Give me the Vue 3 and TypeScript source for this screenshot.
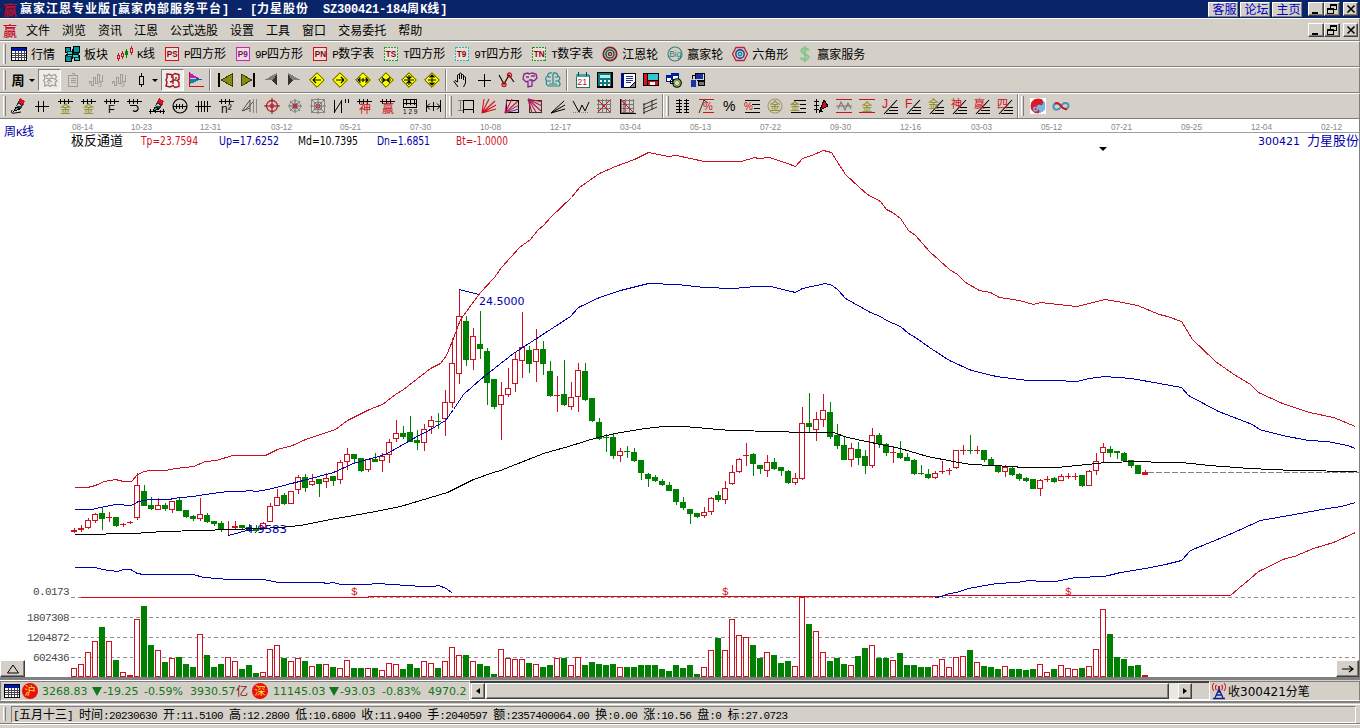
<script setup lang="ts">
import { h, type FunctionalComponent } from 'vue'

interface Shape { d?: string; s?: string; f?: string; w?: number; t?: string; x?: number; y?: number; z?: number; b?: boolean; o?: boolean; dash?: string }
type Icon = Shape[]

const K = '#000', R = '#d01020', G = '#808080', Y = '#8a8a10', P = '#8a2090'
const L = (d: string, s = K, w = 1): Shape => ({ d, s, w })
const S = (d: string, s = K, w = 1): Shape => ({ d, s, w, o: true })
const F = (d: string, f = K, s?: string): Shape => ({ d, f, s, w: 1 })
const T = (t: string, x: number, y: number, s = K, z = 9): Shape => ({ t, x, y, s, z })
const C = (x: number, y: number, r: number) => `M${x - r} ${y}a${r} ${r} 0 1 0 ${2 * r} 0a${r} ${r} 0 1 0 ${-2 * r} 0z`

/** 16x16 glyph made of strokes, fills and short labels */
const Ic: FunctionalComponent<{ g: Icon }> = (props) =>
  h('svg', { width: 16, height: 16, viewBox: '0 0 16 16', style: { overflow: 'visible', display: 'block', flex: 'none' } },
    props.g.map((e) => e.t
      ? h('text', { x: e.x, y: e.y, fill: e.s, 'font-size': e.z, 'font-weight': e.b ? 700 : 400, 'font-family': '"Liberation Sans","Noto Sans CJK SC",sans-serif' }, e.t)
      : h('path', { d: e.d, fill: e.f ?? 'none', stroke: e.s ?? 'none', 'stroke-width': e.w, 'stroke-dasharray': e.dash, 'shape-rendering': e.o ? 'auto' : 'crispEdges' })))
Ic.props = ['g']

/** SimSun-like text: full-width characters at 12px, half-width at 6px */
const Tx: FunctionalComponent<{ t: string }> = (props) =>
  h('span', { style: { whiteSpace: 'pre' } }, (props.t.match(/[\x20-\x7e]+|[^\x20-\x7e]+/g) ?? []).map((r) =>
    h('span', { class: /^[\x20-\x7e]/.test(r) ? 'half' : 'full' }, r)))
Tx.props = ['t']

const box = (t: string, c: string, dotted: boolean, tc = '#900010'): Icon => [
  F('M1 1h14v14H1z', '#e8e0d8'), { d: 'M1.5 1.5h13v13h-13z', s: c, w: 1.4, dash: dotted ? '2 1' : undefined }, { t, x: 2.8, y: 11.2, s: tc, z: 8.2, b: true },
]
const table: Icon = [F('M0 1h16v14H0z', '#000'), F('M1 5h14v9H1z', '#fff'), F('M1 2h14v3H1z', '#0018a8'), L('M1 7.5h14M1 9.5h14M1 11.5h14M4.5 5v9M7.5 5v9M10.5 5v9M13.5 5v9', '#445')]

const tools: { g: Icon; t: string }[] = [
  { t: '行情', g: table },
  { t: '板块', g: [F('M1 1h5v5H1z', '#009898', K), F('M9 0h6v6H9z', '#009898', K), F('M1 9h6v6H1z', '#009898', K), F('M10 9h5v5h-5z', '#30c8c8', K), F('M3 5h5v5H3zM8 7h6v4H8z', '#30d0d0', '#044'), L('M8 3v10M2 8h12')] },
  { t: 'K线', g: [L('M1.5 7v8M5.5 5v8', R), F('M.5 9.5h2v3h-2zM4.500 7.500h2v3h-2z', '#d4d0c8', R), L('M9.5 3v9', '#080'), F('M8 5h3v4H8z', '#080'), L('M14.5 0v9', R), F('M13.500 2.500h2v4h-2z', '#d4d0c8', R)] },
  { t: 'P四方形', g: box('PS', R, false) },
  { t: '9P四方形', g: box('P9', '#d020c0', false, '#801080') },
  { t: 'P数字表', g: box('PN', R, false) },
  { t: 'T四方形', g: box('TS', '#10b030', true) },
  { t: '9T四方形', g: box('T9', '#18c0c8', true) },
  { t: 'T数字表', g: box('TN', '#10a020', true) },
  { t: '江恩轮', g: [S(C(8, 8, 6.7), '#802028', 1.8), S(C(8, 8, 4), '#206048', 1.6), S(C(8, 8, 1.6), '#802028', 1.4)] },
  { t: '赢家轮', g: [S(C(8, 8, 7), '#408080', 1.2), T('Big', 2.2, 11, '#208078', 8.5)] },
  { t: '六角形', g: [S('M4 1.5h8L15.500 8L12 14.500H4L.5 8z', '#c02030', 1.3), S(C(8, 8, 4.2), '#2030b0', 1.4), S(C(8, 8, 1.7), '#109080', 1.4)] },
  { t: '赢家服务', g: [S('M12 4.500C10 1.500 4.500 2 4.500 5S11.500 8 11.500 11S5 14.500 3.500 11.500M8 0v16', '#88c890', 2.3)] },
]

const ghost = '#a09c94'
const period: Icon = [{ t: '周', x: 1.500, y: 12.800, s: K, z: 13, b: true }]
const cloud = (c: string): Icon => [S('M2 3l3 1l2-2l2 2l4-1.500l1.500 2.500l-1.500 2l2 2l-2 1.500l1 3.500l-4-1l-2 1.500l-2-1.500l-3.500 1l.5-3.500l-1.500-2l1.500-2zM4 6l3 1l3-1l2 1M5 10l2-2l3 2M7 12v-2', c, 1.2)]
const wave = (n: string): Icon => [L('M1.500 12v-3h2v4h2V5h2v6h2V2h2v7h3V3', ghost), T(n, 9.500, 15, ghost, 8)]
const dia = (d: string): Icon => [F('M8 0L16 8L8 16L0 8z', '#ffff00'), S('M8 .7L15.300 8L8 15.300L.7 8z', '#403800', 1), S(d, K, 1.1)]
const groupA: Icon[] = [
  cloud(ghost),
  [L('M3.500 3.500h9v11h-9zM6.500 1.500h3v2h-3M6 6.500h5M6 8.500h5M6 10.500h5', ghost)],
  wave('3'), wave('9'),
]
const candleIcon: Icon = [L('M8.500 1v14'), F('M6.500 4.500h4v8h-4z', '#d4d0c8', K)]
const groupB: Icon[] = [
  [S('M2 2l4 .5l1 1l3-2l4 1v5l-2 1l2 2v4l-4 1l-2-2l-3 1.500l-4-1l1-4l-1-2l1-2zM6 5h2v3h3M5 10l3-1v3M11 5v2', '#a01020', 1.4)],
  [F('M2 1l9 5H2z', '#c818c8'), F('M2 7h12L2 12z', '#108898'), F('M8 5l7 3H8z', '#3848a0'), L('M1.500 0v15', R), L('M1 14.500h15', R)],
]
const nav: Icon[] = [
  [F('M1 1h2v14H1z', K), F('M4 8L15 2v12z', '#8a8a10', '#3c3c00')],
  [F('M13 1h2v14h-2z', K), F('M12 8L1 2v12z', '#8a8a10', '#3c3c00')],
  [F('M1 8L14 1v7z', G), F('M1 8h8l5 6V8z', '#333'), F('M10 8L14 2v11z', '#333')],
  [F('M15 8L2 1v7z', G), F('M15 8H7l-5 6V8z', '#333'), F('M6 8L2 2v11z', '#333')],
  dia('M4 8h8M7 5L4 8l3 3'), dia('M4 8h8M9 5l3 3l-3 3'), dia('M3 8h10M5.500 5.500L3 8l2.500 2.500M10.500 5.500L13 8l-2.500 2.500M8 6v4'),
  dia('M3 8h10M4 5.500L7 8l-3 2.500M12 5.500L9 8l3 2.500'), dia('M8 3v10M3 8h10M5.500 4.500L8 7l2.500-2.500M5.500 11.500L8 9l2.500 2.500'), dia('M8 3v10M4 8h8M5.500 5.500L8 3l2.500 2.500M5.500 10.500L8 13l2.500-2.500'),
]
const draw: Icon[] = [
  [S('M5 15L1 9.500l1-1L4.500 10V3q1-1 2 0v4V1.500q1-1 2 0V7V3q1-1 2 0v5V5q1-1 2 0v6l-2 4', K, 1)],
  [L('M8.500 2v13M2 8.500h13')],
  [S('M0 3l5 9L10 3l5 7', K, 1.1), S(C(5, 12.500, 2) + C(10.500, 3, 2), R, 1.3)],
  [S('M2 2l4-1l1 1l3-1l4 1l1 4l-3 3l-2-1v6l-4 1v-6l-2 1l-3-3zM4 5h3M9 4h4M7 8h3', P, 1.3)],
  [S('M7 1C4 0 2 3 3 4C0 5 0 8 2 9C0 11 2 14 4 14H14C16 12 15 10 13 9C16 7 15 5 13 4C13 1 9 0 8 2V13M3 5h3M10 5h3M3 9h3M10 9h3M4 12h3M9 12h3', '#208890', 1.2)],
]
const apps: Icon[] = [
  [F('M2 3h13v12H2z', '#fff', '#207070'), F('M2 2h13v3H2z', '#40a8a8'), L('M4.500 0v4M12.500 0v4', '#333'), T('21', 3.300, 13, R, 9)],
  [F('M0 0h16v16H0z', '#000'), F('M1 1h13v13H1z', '#107880'), F('M3 3h10v3H3z', '#b0f0e0'), F('M3 8h2v2H3zM7 8h2v2H7zM11 8h2v2h-2zM3 12h2v2H3zM7 12h2v2H7zM11 12h2v2h-2z', '#fff')],
  [F('M1 1h14v14H1z', '#fff', K), F('M1 1h3v15H1z', '#001080'), L('M6 4.500h7M6 6.500h7M6 8.500h7M6 10.500h5', '#2030a0'), F('M10 15l5-5v5z', '#888', K)],
  [F('M0 1h16v13H0z', '#000'), F('M1 2h3v11H1z', '#e01020'), F('M5 2h10v6H5z', '#30c8d0'), F('M5 9h10v4H5z', '#d01020'), F('M7 10h5v3H7z', '#fff')],
  [F('M0 3h6v6H0zM5 1h7v6H5z', '#fff', '#001890'), L('M0 4.500h6M5 2.500h7', '#0020b0', 2), S(C(11, 11, 3.600), '#000', 2.5), S(C(11, 11, 3), '#80b040', 1.5), L('M4 8v3h4')],
  [F('M6 1h9v7H6z', '#d8d8e8', K), F('M7 2h7v5H7z', '#1830a0'), F('M1 7h6v8H1z', '#2030a0', '#c8c8d8'), F('M9 9h6v4H9z', '#777', K), L('M3 3.500h3M3.500 3v4')],
]

const comb = 'M.5 3.500h15M3.500 1v5M7.500 1v5M11.500 1v5'
const grid = (c: string, x: string): Icon => [L('M2.500 1v14M6.500 1v14M10.500 1v14M14.500 1v14M1 2.500h14M1 6.500h14M1 10.500h14M1 14.500h14', c), S(x, R, 1)]
const fanUp = 'M1 15L3 1M1 15L8 1M1 15L14 3M1 15l14-8M1 15l14-4'
const slope = (t: string, c: string): Icon => [L('M4 15.500h12M7 12.500h9M9 9.500h7'), S('M2 16L15 2', K, 1.1), T(t, 0, 10, c, /[A-Z]/.test(t) ? 12 : 11)]
const pen = (x = 0): Shape[] => [F(`M${5 + x} 8l4-8l5 3l-4 8z`, '#333'), F(`M${9 + x} 0l5 3l-1.500 4l-5-3z`, '#e01020'), F(`M${6 + x} 8l2-3l2 3z`, '#b0c8c8'), F(`M${5 + x} 9l-2 4l6-2z`, '#40a0a0', '#000')]

const lines1: Icon[] = [
  [...pen(), S('M1 12q-2 4 3 3l6-1', K, 1)],
  [L('M1 8.500h14M4.500 3v11M9.500 3v11')],
  [L(comb, K), T('金', 3, 15, Y, 11)],
  [L(comb, K), T('金', 3, 15, Y, 11)],
  [L(comb, K), T('F', 5, 15, K, 11)],
  [L(comb, K), S('M4 7.500h6a3 3 0 1 1-3 5', K, 1.2)],
  [...pen(1), L('M0 13.500h16M1.500 11v5M6.500 12v3M11.500 12v3M14.500 11v5')],
  [S(C(8, 8, 7), K, 1.2), L('M1 8.500h14M4.500 6v5M7.500 6v5M10.500 6v5')],
  [L('M0 8.500h16M3.500 3v11M6.500 3v11M9.500 3v11M12.500 3v11')],
  [L(comb, K), T('n²', 3, 15, K, 12)],
  [S('M1 13L9 2v12M3 13l9-9M1 13l8-3', '#555', 1), L('M12.500 1v14M15.500 1v14', '#888')],
  [S(C(8, 8, 5.500), R, 1.3), S('M8 0v16M0 8h16', '#602020', 1), S(C(8, 8, 2), R, 1)],
  [S('M8 1v14M1 8h14M3 3l10 10M13 3L3 13', '#606868', 1), S(C(8, 8, 3) + C(8, 8, 5.500), '#888', 1), F('M6 6h4v4H6z', '#c03040')],
  [L('M1.500 1.500h13v13h-13zM4.500 4.500h7v7h-7z', '#888'), S('M8 0v16M0 8h16M2 2l12 12M14 2L2 14', '#777', 1), S(C(8, 8, 2), '#c03040', 1.2)],
  [L('M1.500 2v13M8.500 2v13M12.500 1v4M15.500 1v4'), S('M1.500 14L8.500 3', K, 1)],
  [L(comb, K), T('神', 3, 15, R, 12)],
  [L(comb, K), T('赢', 3, 15, R, 12)],
  [L('M1.500 1v8M14.500 1v8M1 1.500h14M1 5.500h14M4.500 1v6M8.500 1v6M12.500 1v6M1 9.500h14'), T('1 2 9', 1, 15.500, K, 6.500)],
  [L('M1.500 2v12M15.500 2v12M8.500 4v9M2 8.500h13'), S('M5 5.500L2 8.500l3 3M12 5.500l3 3l-3 3', K, 1)],
]
const lines2: Icon[] = [
  [L('M0 2.500h5M2.500 2v11M0 12.500h5', G), L('M5.500 2.500h10v9h-10zM5.500 12v3M15.500 12v3')],
  [S(fanUp, R, 1.1)],
  [L('M2.500 2.500h12v12h-12z'), S('M1 15L3 1M1 15l14-8M1 15l14-4', P, 1), S('M1 15L8 1M1 15L14 3', R, 1.1)],
  [L('M2.500 2.500h12v12h-12z', '#333'), S('M1 1l4 14M1 1l13 12M1 1l14 3', R, 1.1), S('M1 1l8 13M1 1l14 7', P, 1.1)],
  [S('M1 15L14 3M1 15l14-8M1 15l14-4', K, 1)],
  [S('M0 3l6 11L9 7l3 6l4-9', K, 1), { d: 'M0 14.500h16', s: G, w: 1, dash: '1 1' }],
  grid('#777', 'M2 2l12 12M14 2L2 14'),
  [...grid('#777', 'M2 2l12 12M5 2v13'), L('M1.500 1v14.500h15')],
  [S('M1 7l14-6M1 11l14-6M1 15l14-6M2 5v11M10 2v10', '#333', 1)],
]
const lines3: Icon[] = [
  [L('M1 2.500h6M1 5.500h6M1 8.500h6M1 11.500h6M1 14.500h6M9 2.500h5M9 5.500h5M9 8.500h5M9 11.500h5M9 14.500h5M4.500 1v14M11.500 1v14')],
  [L('M1 1.500h15', R), S('M1 15L6 2M6 2l4 3', '#333', 1), T('%', 5, 12, R, 11), L('M5 14.500h11', R)],
  [T('%', 2, 13, K, 14)],
  [L('M1 2.500h15M8 6.500h8M10 10.500h6M1 14.500h15'), T('%', 0, 12, R, 10)],
  [S(C(8, 8, 7), '#9a9a70', 1.1), T('金', 2.500, 12, Y, 11)],
  [L('M4 2.500h12M10 6.500h6M10 10.500h6M1 14.500h15'), T('金', 0, 12, Y, 10)],
  [L('M3.500 1v14M1 3.500h5M1 7.500h5M1 11.500h5'), F('M7 12l4-10l4 6z', '#c01020', K), F('M7 12l-1 3l5-2z', K)],
  [L('M0 1.500h16M0 14.500h16', R), S('M0 8h16M2 11l3-7l4 8l3-7l3 6', '#777', 1.1)],
  [L('M0 1.500h16M0 14.500h16', R), T('金', 2.500, 12.500, Y, 11)],
  slope('J', R), slope('F', R), slope('金', Y), slope('神', R), slope('赢', R), slope('四', R),
]
const lines4: Icon[] = [
  [F('M0 0h16v16H0z', '#fff'), F(C(8, 8, 7.500), '#78b8e8'), { d: 'M8 .5A7.500 7.500 0 0 0 8 15.500C13 13 4 9 8 7C12 6 14 3 12 1.500Q10 .5 8 .5', f: '#e01828', o: true }, S(C(5.500, 11, 1.800), '#78b8e8', 1.5), S(C(11, 5, 1.500), '#c02030', 1.3)],
  [S('M8 8C5 4 0 5 .5 9S6 12 8 9', '#5090b8', 2), S('M8 8C11 12 16 11 15.500 7.500S10 4 8 8', '#5090b8', 2), S('M2 5.500Q5 4 8 8T14 11', R, 2)],
]
const lineGroups = [lines1, lines2, lines3, lines4]

const menus = ['文件', '浏览', '资讯', '江恩', '公式选股', '设置', '工具', '窗口', '交易委托', '帮助']
const links = ['客服', '论坛', '主页']
const winIcons: Icon[] = [
  [F('M4 11h6v2H4z')],
  [L('M6.500 3.500h6v5h-6zM6 4.500h7M3.500 7.500h6v5h-6zM3 8.500h7'), F('M4 9h5v3H4z', '#d4d0c8')],
  [S('M4.500 4.500l7 7M11.500 4.500l-7 7', K, 1.6)],
]

/* weekly bars: colour, high, body top, body bottom, low, volume top */
const raw = `r528 530 531 532 668,r525 528 529 531 664,r518 520 527 528 652,r513 514 520 522 641,g507 513 518 529 627,r512 517 517 521 641,g517 517 525 526 660,r523 524 524 526 672,r521 522 522 523 675,r473 485 517 519 619,g485 491 505 505 606,g497 505 508 509 645,r498 505 509 509 650,g503 505 508 510 662,r501 501 509 512 658,g497 500 510 510 657,g510 510 516 517 664,g515 516 518 520 667,r498 514 518 520 634,g513 515 521 522 655,g521 521 523 525 667,g521 523 529 531 664,r521 529 529 535 657,r521 526 527 528 661,g525 525 527 528 669,g524 527 530 531 665,g525 529 530 531 673,r522 523 527 528 672,r503 506 521 521 649,r489 497 505 505 645,g493 495 503 504 658,r491 491 503 503 661,r475 477 489 493 658,g474 477 487 491 661,r474 481 484 485 666,g479 479 483 496 664,r473 478 481 487 664,g476 476 480 485 667,r460 462 479 483 668,r448 454 461 469 660,g454 454 458 462 668,g458 458 470 471 668,r459 459 469 471 668,g453 459 461 461 668,r453 456 460 471 670,r439 442 454 462 663,r420 433 438 441 664,g426 433 436 438 669,g416 432 441 441 664,g430 440 442 449 668,r424 429 442 450 661,r416 420 426 433 663,g413 421 421 428 668,r390 402 418 435 661,r338 363 402 407 647,r289 316 373 383 655,g316 321 359 365 655,r328 336 359 369 661,g311 344 348 358 664,g348 351 382 404 666,g379 379 406 408 674,r382 395 404 439 649,r368 388 394 396 658,r352 359 383 391 659,r312 347 360 377 659,g346 350 363 372 663,r329 349 361 381 664,g341 349 363 374 667,g361 371 395 396 665,r376 395 395 411 658,g360 394 404 405 658,r382 397 406 409 665,r363 370 396 411 657,g363 371 399 400 665,g398 398 420 421 662,g418 422 438 439 664,g434 437 437 451 665,g433 437 455 458 664,r448 451 455 461 667,g446 451 451 457 667,g448 452 460 461 667,g460 460 472 479 665,g473 474 478 486 665,g475 477 480 481 665,g479 481 484 485 669,g482 485 490 490 671,g489 489 501 504 665,g497 502 507 509 668,g509 509 513 523 665,g513 513 516 517 674,r507 512 515 517 667,r497 498 511 514 650,g491 495 499 501 638,r481 488 499 503 650,r465 472 483 484 619,r458 459 471 472 635,r443 455 455 465 637,g453 454 463 475 645,g465 465 468 473 658,r455 462 470 476 652,g458 462 468 469 655,g467 467 470 475 663,g470 471 482 483 661,r473 478 482 484 666,r407 423 478 479 597,g393 423 426 432 624,r412 419 429 440 631,r394 410 419 426 652,g402 412 436 438 661,g424 435 445 448 658,g436 445 459 459 664,r443 448 459 466 665,g442 449 457 464 656,g450 456 465 473 648,r428 435 465 467 645,g433 435 443 447 658,g443 444 452 455 658,r446 452 452 462 660,g441 453 457 458 653,g453 457 460 460 665,g459 460 473 474 665,g465 473 473 474 667,g469 474 477 478 667,r471 473 477 478 665,r461 471 471 473 659,r468 470 470 474 667,r450 450 467 468 657,r445 450 450 454 656,g435 450 450 453 650,r446 450 450 453 662,g450 450 459 461 666,g457 459 464 464 667,g465 465 471 472 669,r465 467 471 476 666,g467 468 474 475 669,g473 474 478 480 669,g477 478 480 481 670,g479 479 488 488 669,r479 480 488 495 664,r476 479 479 481 672,g477 478 481 482 669,r474 476 480 480 665,r473 476 476 478 668,r473 476 476 479 669,g475 475 485 486 668,r470 471 485 485 666,r453 461 470 474 649,r443 447 452 462 609,g446 449 452 456 634,g451 451 452 458 657,g452 453 460 460 659,g460 460 465 467 666,g465 465 473 473 665,r470 472 474 474 675`
const bars = raw.split(',').map((e, i) => {
  const [hi, top, bot, low, vol] = e.slice(1).split(' ').map(Number)
  return { x: 74 + 7 * i, up: e[0] === 'r', hi, top, bot, low, vol, thin: bot - top < 3 }
})

const tp = '74,487 87,487 95,485 104,481 115,479 123,481 131,481 137,474 144,471 150,470 165,470 175,468 193,466 205,461 216,460 232,455 265,455 277,449 292,445 305,439 320,434 335,429 347,420 369,409 382,404 395,394 403,389 412,382 430,368 440,363 446,355 453,338 460,319 480,292 494,277 501,267 519,247 530,239 537,230 543,225 550,217 571,197 579,187 599,173 615,166 634,159 648,152 668,156 676,155 704,161 741,161 754,157 758,158 769,157 781,161 787,163 795,166 802,158 811,155 823,150 831,152 836,160 845,174 859,187 867,194 880,201 886,209 892,212 900,218 908,230 915,235 929,251 949,269 957,274 965,282 979,290 990,292 999,297 1019,300 1033,304 1040,302 1058,304 1076,306 1089,303 1104,299 1117,301 1137,305 1159,314 1167,316 1181,321 1192,339 1215,361 1232,373 1250,384 1258,392 1282,403 1309,412 1333,417 1355,426'
const up = '74,509 91,509 100,507 115,504 131,505 138,501 150,499 168,499 180,497 193,496 205,494 227,491 242,491 250,490 255,491 268,489 287,484 303,480 333,472 353,463 378,456 387,453 413,438 430,429 445,420 453,409 463,394 480,379 490,371 513,353 530,342 570,316 578,307 599,297 620,290 648,283 677,284 704,287 733,288 755,286 770,286 795,292 802,288 825,283 832,285 838,290 845,298 870,312 880,316 886,320 900,326 908,333 915,337 929,347 949,360 971,370 996,376 1027,380 1055,380 1076,381 1089,378 1104,376 1131,378 1159,383 1181,387 1188,395 1218,411 1252,424 1259,429 1282,435 1308,440 1327,441 1347,445 1355,448'
const md = '74,534 98,534 113,533 133,533 163,531 200,530 260,528 280,527 300,525 330,519 353,515 375,511 400,506 447,492 473,479 493,472 500,470 543,453 568,446 597,437 615,433 645,428 663,426 683,426 707,428 730,430 777,431 800,432 833,432 847,437 880,444 900,448 927,456 953,461 970,464 993,465 1025,467 1057,467 1087,464 1105,462 1140,461 1160,462 1181,462 1209,465 1249,468 1294,470 1357,471'
const dn1 = '74,567 95,567 102,569 117,571 123,569 130,569 137,573 143,574 193,574 203,577 218,578 227,579 263,579 278,582 322,582 326,583 333,582 340,584 367,584 377,583 407,585 422,586 433,586 438,585 446,588 452,593'
const dn2 = '935,597 941,596 949,593 956,592 968,588 996,583 1016,582 1029,580 1041,581 1055,581 1075,577 1104,576 1120,572 1145,568 1165,564 1181,560 1190,550 1229,534 1260,520 1294,514 1327,508 1341,506 1355,502'
const bt = '1230,595 1238,588 1249,579 1258,571 1285,558 1294,556 1313,548 1333,542 1355,532'

const dates: [string, number][] = [['08-14', 72], ['10-23', 131], ['12-31', 200], ['03-12', 271], ['05-21', 340], ['07-30', 410], ['10-08', 480], ['12-17', 550], ['03-04', 620], ['05-13', 690], ['07-22', 760], ['09-30', 830], ['12-16', 900], ['03-03', 971], ['05-12', 1041], ['07-21', 1111], ['09-25', 1181], ['12-04', 1251], ['02-12', 1321]]
const values: [string, number, number, string][] = [['Tp=23.7594', 141, 57, '#d01020'], ['Up=17.6252', 219, 60, '#0000a8'], ['Md=10.7395', 298, 60, '#000'], ['Dn=1.6851', 377, 53, '#0000a8'], ['Bt=-1.0000', 456, 52, '#d01020']]
const axis: [string, number, number][] = [['0.0173', 33, 595], ['1807308', 27, 621], ['1204872', 27, 641], ['602436', 33, 661]]
const statusText = '[五月十三] 时间:20230630 开:11.5100 高:12.2800 低:10.6800 收:11.9400 手:2040597 额:2357400064.00 换:0.00 涨:10.56 盘:0 标:27.0723'
const tower: Icon = [S('M8 6L3.500 16M8 6l4.500 10M5 12h6M6 9h4M2 15.500h12', '#102090', 1.3), S('M5.500 7a3.500 3.500 0 0 1 0-5M10.500 7a3.500 3.500 0 0 0 0-5M3 8a6 6 0 0 1 0-8M13 8a6 6 0 0 0 0-8', R, 1.1), F('M7 3h2v3H7z', R)]
</script>

<template>
  <div class="app">
    <header class="title">
      <span class="logo">赢</span>
      <Tx class="caption" t="赢家江恩专业版[赢家内部服务平台] - [力星股份  SZ300421-184周K线]" />
      <div class="links"><span v-for="l in links" :key="l">{{ l }}</span></div>
      <div class="win"><button v-for="(g, i) in winIcons" :key="i"><Ic :g="g" /></button></div>
    </header>

    <nav class="menu">
      <span class="logo">赢</span>
      <span v-for="m in menus" :key="m" class="mi">{{ m }}</span>
      <div class="win"><button v-for="(g, i) in winIcons" :key="i"><Ic :g="g" /></button></div>
    </nav>

    <div class="bar first">
      <i class="grip" />
      <div v-for="t in tools" :key="t.t" class="tool"><Ic :g="t.g" /><Tx :t="t.t" /></div>
    </div>

    <div class="bar">
      <i class="grip" />
      <div class="grp">
        <div class="cell drop"><Ic :g="period" /><b /></div>
        <div v-for="(g, i) in groupA" :key="i" class="cell" :class="{ pressed: i === 0 }"><Ic :g="g" /></div>
        <div class="cell drop"><Ic :g="candleIcon" /><b /></div>
        <div v-for="(g, i) in groupB" :key="i" class="cell" :class="{ pressed: i === 0 }"><Ic :g="g" /></div>
      </div>
      <i class="sep" />
      <div class="grp"><div v-for="(g, i) in nav" :key="i" class="cell"><Ic :g="g" /></div></div>
      <i class="sep" />
      <div class="grp"><div v-for="(g, i) in draw" :key="i" class="cell"><Ic :g="g" /></div></div>
      <i class="sep" />
      <div class="grp"><div v-for="(g, i) in apps" :key="i" class="cell"><Ic :g="g" /></div></div>
    </div>

    <div class="bar">
      <template v-for="(grp, n) in lineGroups" :key="n">
        <i class="grip" :class="{ mid: n > 0 }" />
        <div class="grp"><div v-for="(g, i) in grp" :key="i" class="cell"><Ic :g="g" /></div></div>
      </template>
    </div>

    <main class="chart">
      <svg width="1359" height="558" viewBox="0 119 1359 558">
        <g class="date"><text v-for="d in dates" :key="d[1]" :x="d[1]" y="130" textLength="21" lengthAdjust="spacingAndGlyphs">{{ d[0] }}</text></g>
        <path d="M70 132.500H1359" stroke="#a0a0a0" />
        <text class="cjk" x="4" y="136" fill="#0000a8">周<tspan class="mono">K</tspan>线</text>
        <text class="cjk big" x="71" y="145">极反通道</text>
        <text v-for="v in values" :key="v[0]" class="tah" :x="v[1]" y="145" :textLength="v[2]" lengthAdjust="spacingAndGlyphs" :fill="v[3]">{{ v[0] }}</text>
        <text class="ver" x="1258" y="145" textLength="42" lengthAdjust="spacingAndGlyphs" fill="#0000a8">300421</text>
        <text class="cjk big" x="1307" y="145" fill="#0000a8">力星股份</text>
        <path d="M1099 147h8l-4 4z" />
        <g stroke="#909090" stroke-dasharray="3.500 3" shape-rendering="crispEdges">
          <path d="M71 597.500H1358M71 617.500H1358M71 637.500H1358M71 657.500H1358" fill="none" />
        </g>
        <g class="mono axis"><text v-for="a in axis" :key="a[0]" :x="a[1]" :y="a[2]">{{ a[0] }}</text></g>

        <g shape-rendering="crispEdges">
          <template v-for="b in bars" :key="b.x">
            <rect :x="b.x" :y="b.hi" width="1" :height="b.top - b.hi" :fill="b.up ? '#d01020' : '#008000'" />
            <rect :x="b.x" :y="b.bot" width="1" :height="b.low - b.bot + 1" :fill="b.up ? '#d01020' : '#008000'" />
            <rect v-if="b.up && !b.thin" :x="b.x - 2.5" :y="b.top + .5" width="5" :height="b.bot - b.top" fill="#fff" stroke="#d01020" />
            <rect v-else :x="b.x - 3" :y="b.top" width="6" :height="b.bot - b.top + 1" :fill="b.up ? '#d01020' : '#008000'" />
            <rect v-if="b.up && b.vol < 674" :x="b.x - 2.5" :y="b.vol + .5" width="5" :height="676 - b.vol" fill="#fff" stroke="#d01020" />
            <rect v-else :x="b.x - 3" :y="b.vol" width="6" :height="677 - b.vol" :fill="b.up ? '#d01020' : '#008000'" />
          </template>
          <g fill="#e00010">
            <rect x="81" y="597" width="288" height="1" />
            <rect x="368" y="596" width="575" height="1" />
            <rect x="942" y="595" width="289" height="1" />
          </g>
        </g>
        <g fill="none" shape-rendering="crispEdges" transform="translate(.5 .5)">
          <path d="M1147 472H1358" stroke="#808080" stroke-dasharray="6 2" />
          <polyline :points="tp" stroke="#c81020" />
          <polyline :points="up" stroke="#0000b0" />
          <polyline :points="md" stroke="#000" />
          <polyline :points="dn1" stroke="#0000b0" />
          <polyline :points="dn2" stroke="#0000b0" />
          <polyline :points="bt" stroke="#c81020" />
          <path d="M459 289L478 294M228 535L250 529" stroke="#0000b0" />
        </g>
        <text class="ver" x="479" y="305" fill="#0000a8">24.5000</text>
        <text class="ver" x="246" y="533" textLength="41" lengthAdjust="spacingAndGlyphs" fill="#0000a8">4.9583</text>
        <g class="mono" fill="#d01020"><text x="351" y="595">$</text><text x="722" y="595">$</text><text x="1065" y="595">$</text></g>
      </svg>
      <button class="corner left"><svg width="14" height="10"><path d="M1.500 9L7 1l5.500 8z" fill="none" stroke="#000" /></svg></button>
      <button class="corner right"><svg width="14" height="10"><path d="M1 5h11M8 2l4 3l-4 3" fill="none" stroke="#000" stroke-width="1.200" /></svg></button>
    </main>

    <section class="quotes">
      <div class="q">
        <Ic :g="table" />
        <span class="badge">沪</span>
        <span class="n w1">3268.83</span><i class="dn" /><span class="n w2">-19.25</span><span class="n w3">-0.59%</span><span class="n w4">3930.57</span><em>亿</em>
        <span class="badge b2">深</span>
        <span class="n w5">11145.03</span><i class="dn" /><span class="n w6">-93.03</span><span class="n w3">-0.83%</span><span class="n">4970.2</span>
      </div>
      <div class="scroll">
        <button><i class="al" /></button>
        <div class="thumb" />
        <div class="track" />
        <button><i class="ar" /></button>
      </div>
      <div class="feed"><Ic :g="tower" /><span>收<span class="num">300421</span>分笔</span></div>
    </section>

    <footer class="status">
      <i class="grip" />
      <div class="cellbox"><Tx :t="statusText" /></div>
    </footer>
  </div>
</template>

<style>
body { background: #d4d0c8; overflow: hidden; }
.half { font-family: "Liberation Mono", monospace; font-size: 11px; letter-spacing: -0.6px; }
.full { font-family: "Noto Sans CJK SC", sans-serif; font-size: 12px; }
</style>

<style scoped>
.app { width: 1360px; height: 728px; box-sizing: border-box; display: flex; flex-direction: column; background: #d4d0c8; font: 12px "Noto Sans CJK SC", sans-serif; color: #000; line-height: 16px; }
button { padding: 0; margin: 0; background: #d4d0c8; border: 1px solid; border-color: #fff #404040 #404040 #fff; box-shadow: inset -1px -1px #808080; display: flex; align-items: center; justify-content: center; box-sizing: border-box; }
.title { height: 18px; background: #0a246a; display: flex; align-items: center; padding: 0 2px 0 3px; flex: none; }
.logo { color: #c80c28; font-size: 14px; width: 17px; flex: none; line-height: 18px; height: 18px; font-weight: 500; }
.caption { color: #fff; font-weight: 700; }
.caption :deep(.full) { letter-spacing: 1px; }
.caption :deep(.half) { font-size: 12px; letter-spacing: -0.2px; }
.links { margin-left: auto; display: flex; gap: 2px; margin-right: 6px; }
.links span { width: 30px; height: 15px; box-sizing: border-box; background: #d4d0c8; color: #0000c0; border: 1px solid; border-color: #fff #808080 #808080 #fff; text-align: center; line-height: 12px; padding-left: 3px; white-space: nowrap; }
.win { display: flex; }
.win button { width: 16px; height: 14px; }
.win button:nth-child(3) { width: 15px; margin-left: 3px; }
.menu { height: 23px; box-sizing: border-box; border-top: 1px solid #fff; border-bottom: 1px solid #808080; display: flex; align-items: center; padding: 0 1px 0 3px; flex: none; border-right: 1px solid #808080; }
.menu .logo { width: 23px; }
.mi { margin-right: 12px; }
.menu .win { margin-left: auto; }
.bar { height: 26px; box-sizing: border-box; border-top: 1px solid #fff; border-bottom: 1px solid #808080; border-right: 1px solid #808080; display: flex; align-items: center; padding-left: 3px; flex: none; }
.grip { width: 3px; height: 20px; flex: none; box-sizing: border-box; border-left: 1px solid #fff; border-right: 1px solid #808080; margin-right: 1px; }
.grip.mid { margin: 0 2px 0 5px; position: relative; }
.grip.mid::before { content: ""; position: absolute; left: -5px; top: -2px; height: 24px; border-left: 1px solid #808080; border-right: 1px solid #fff; }
.first .grip { margin-right: 5px; }
.tool { display: flex; align-items: center; gap: 4px; margin-right: 9px; }
.grp { display: flex; }
.cell { width: 23px; height: 22px; flex: none; display: flex; align-items: center; justify-content: center; padding-left: 1px; box-sizing: border-box; }
.drop { width: 31px; justify-content: flex-start; padding-left: 3px; }
.drop b { border: 3px solid transparent; border-top-color: #000; border-bottom: 0; margin-left: 3px; }
.pressed { border: 1px solid; border-color: #808080 #fff #fff #808080; background: #efede9; }
.sep { width: 2px; height: 22px; margin: 0 2px; box-sizing: border-box; border-left: 1px solid #808080; border-right: 1px solid #fff; flex: none; }
.chart { height: 558px; background: #fff; border-right: 1px solid #808080; box-sizing: border-box; position: relative; flex: none; }
.chart > svg { display: block; }
.date { font: 9px "Liberation Sans", sans-serif; fill: #888; }
.cjk { font: 12px "Noto Sans CJK SC", sans-serif; }
.big { font-size: 13px; }
.mono { font: 11px "Liberation Mono", monospace; letter-spacing: -0.6px; }
.axis { fill: #484848; }
.tah { font: 11.5px "DejaVu Sans Condensed", "DejaVu Sans", sans-serif; }
.ver { font: 11px "DejaVu Sans", sans-serif; }
.corner { position: absolute; top: 541px; height: 17px; }
.left { left: 0; width: 25px; }
.right { right: 0; width: 23px; }
.quotes { height: 26px; box-sizing: border-box; border-top: 3px solid #808080; border-bottom: 2px solid #808080; display: flex; flex: none; }
.q { width: 470px; box-sizing: border-box; display: flex; align-items: center; padding-left: 3px; border: 1px solid; border-color: #808080 #fff #fff #808080; box-shadow: 0 -1px #fff; white-space: nowrap; margin-top: 1px; }
.badge { width: 16px; height: 16px; border-radius: 50%; background: #e81010; color: #ffe820; font-size: 11px; line-height: 15px; text-align: center; margin: 0 4px 0 2px; flex: none; }
.b2 { margin: 0 5px 0 4px; }
.n { font: 11px "DejaVu Sans", sans-serif; color: #107818; flex: none; }
.w1 { width: 50px; }
.w2 { width: 41px; }
.w3 { width: 46px; }
.w4 { width: 46px; }
.w5 { width: 56px; }
.w6 { width: 42px; }
.dn { border: 5.5px solid transparent; border-top: 9px solid #107818; border-bottom: 0; flex: none; margin-right: 1px; }
em { font-style: normal; color: #801010; width: 12px; flex: none; }
.scroll { width: 739px; display: flex; margin-top: 1px; border-top: 2px solid #404040; border-bottom: 2px solid #fff; box-sizing: border-box; flex: none; padding-left: 1px; }
.scroll button { width: 14px; flex: none; }
.thumb { width: 684px; box-sizing: border-box; border: 1px solid; border-color: #fff #404040 #404040 #fff; box-shadow: inset -1px -1px #808080; border-left-width: 2px; }
.track { width: 9px; background: #eae8e3; }
.al { border: 3px solid transparent; border-right: 4px solid #000; border-left: 0; }
.ar { border: 3px solid transparent; border-left: 4px solid #000; border-right: 0; }
.feed { flex: 1; display: flex; align-items: center; padding-left: 1px; gap: 1px; border: 1px solid; border-color: #808080 #808080 #fff #fff; margin-top: 1px; }
.num { font-family: "DejaVu Sans", sans-serif; }
.status { height: 20px; margin-top: 1px; display: flex; align-items: center; border-top: 1px solid #fff; border-bottom: 1px solid #808080; box-sizing: border-box; padding: 0 4px 0 3px; box-shadow: 0 1px #fff; flex: none; }
.status .grip { height: 14px; margin-right: 5px; }
.cellbox { flex: 1; height: 17px; line-height: 13px; box-sizing: border-box; border: 1px solid; border-color: #808080 #fff #fff #808080; padding-left: 1px; white-space: nowrap; }
</style>
